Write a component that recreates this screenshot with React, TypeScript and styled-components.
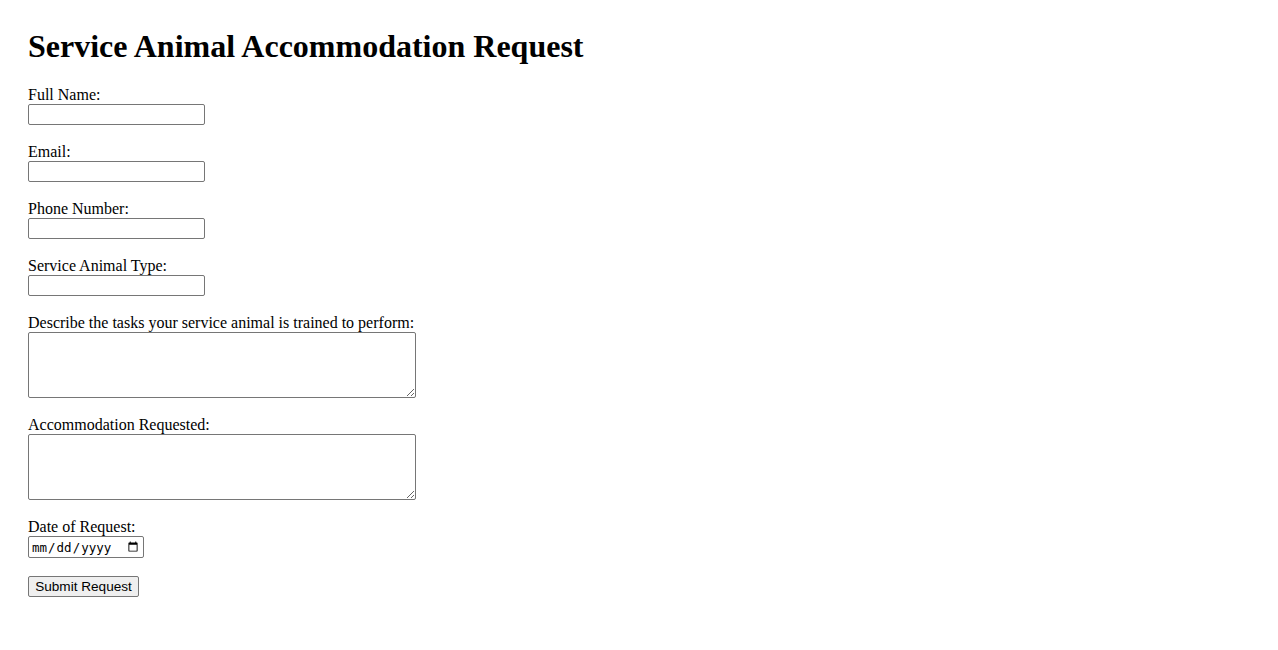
import React from "react";
import styled, { createGlobalStyle } from "styled-components";

const GlobalStyle = createGlobalStyle`
  html, body {
    margin: 0;
    padding: 0;
    background: #ffffff;
  }
  body {
    font-family: "Liberation Serif", "Times New Roman", serif;
    font-size: 16px;
    color: #000000;
  }
`;

const Page = styled.div`
  padding: 28px 28px 40px 28px;
`;

const Title = styled.h1`
  margin: 0 0 21px 0;
  font-family: "Liberation Serif", "Times New Roman", serif;
  font-size: 32px;
  font-weight: bold;
  line-height: 37px;
`;

const Form = styled.form`
  display: flex;
  flex-direction: column;
  align-items: flex-start;
`;

const Field = styled.div`
  display: flex;
  flex-direction: column;
  align-items: flex-start;
  margin-bottom: 18px;
`;

const Label = styled.label`
  display: block;
  height: 18px;
  line-height: 18px;
  font-size: 16px;
  font-family: "Liberation Serif", "Times New Roman", serif;
  white-space: nowrap;
`;

const TextInput = styled.input`
  display: block;
  box-sizing: border-box;
  width: 177px;
  height: 21px;
  margin: 0;
  padding: 1px 2px;
  border: 1px solid #767676;
  border-radius: 2px;
  background: #ffffff;
  font-family: "Liberation Sans", Arial, sans-serif;
  font-size: 13.33px;
`;

const TextArea = styled.textarea`
  display: block;
  box-sizing: border-box;
  width: 388px;
  height: 66px;
  margin: 0;
  padding: 2px;
  border: 1px solid #767676;
  border-radius: 2px;
  background: #ffffff;
  font-family: "Liberation Mono", monospace;
  font-size: 13.33px;
`;

const DateInput = styled.input`
  display: block;
  box-sizing: border-box;
  width: 116px;
  height: 22px;
  margin: 0;
  padding: 1px 2px;
  border: 1px solid #767676;
  border-radius: 2px;
  background: #ffffff;
  font-family: "DejaVu Sans Mono", "Liberation Mono", monospace;
  font-size: 12.5px;
  color: #000;
`;

const SubmitButton = styled.button`
  box-sizing: border-box;
  width: 111px;
  height: 21px;
  margin: 0;
  padding: 1px 4px;
  border: 1px solid #767676;
  border-radius: 2px;
  background: #efefef;
  font-family: "Liberation Sans", Arial, sans-serif;
  font-size: 13.6px;
  color: #000;
  line-height: 15px;
  text-align: center;
`;

export default function App() {
  return (
    <>
      <GlobalStyle />
      <Page>
        <Title>Service Animal Accommodation Request</Title>
        <Form onSubmit={(e) => e.preventDefault()}>
          <Field>
            <Label htmlFor="fullName">Full Name:</Label>
            <TextInput id="fullName" type="text" />
          </Field>
          <Field>
            <Label htmlFor="email">Email:</Label>
            <TextInput id="email" type="email" />
          </Field>
          <Field>
            <Label htmlFor="phone">Phone Number:</Label>
            <TextInput id="phone" type="tel" />
          </Field>
          <Field>
            <Label htmlFor="animalType">Service Animal Type:</Label>
            <TextInput id="animalType" type="text" />
          </Field>
          <Field>
            <Label htmlFor="tasks">Describe the tasks your service animal is trained to perform:</Label>
            <TextArea id="tasks" />
          </Field>
          <Field>
            <Label htmlFor="accommodation">Accommodation Requested:</Label>
            <TextArea id="accommodation" />
          </Field>
          <Field>
            <Label htmlFor="date">Date of Request:</Label>
            <DateInput id="date" type="date" />
          </Field>
          <SubmitButton type="submit">Submit Request</SubmitButton>
        </Form>
      </Page>
    </>
  );
}
